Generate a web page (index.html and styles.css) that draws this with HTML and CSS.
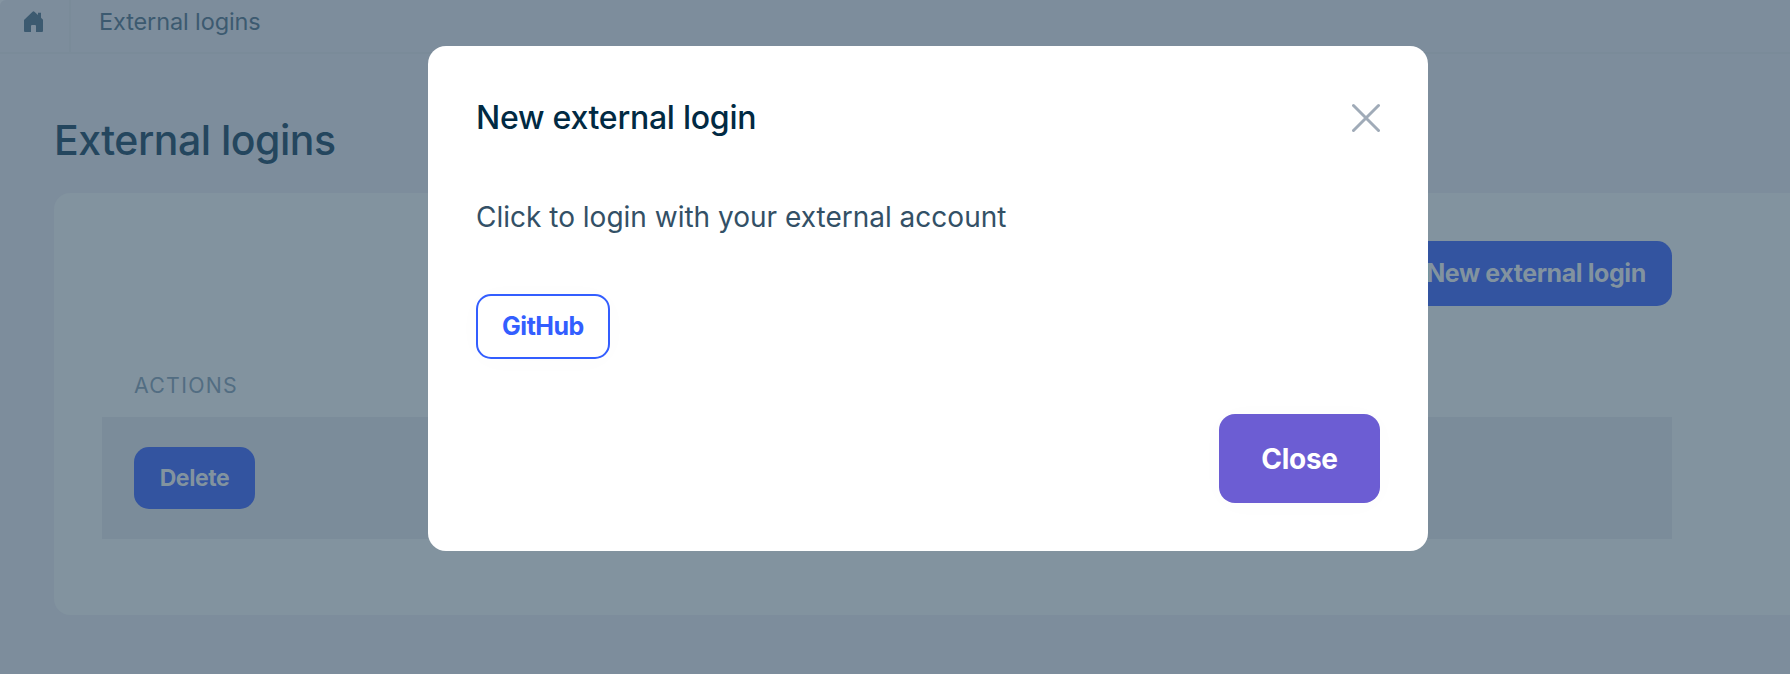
FILE: index.html
```
<!DOCTYPE html>
<html lang="en">
<head>
<meta charset="utf-8">
<title>External logins</title>
<link rel="stylesheet" href="styles.css">
</head>
<body>
<div class="page">
  <header class="topbar">
    <a class="home" aria-label="Home">
      <svg width="20" height="22" viewBox="0 0 20 22" fill="currentColor"><path d="M0 9 L8.6 .7 Q9.5 -.1 10.4 .7 L14 4 V1.8 H17 V6.8 L19 8.8 V20 Q19 21 18 21 H12 V15 Q12 14 11 14 H8 Q7 14 7 15 V21 H1 Q0 21 0 20 Z"/></svg>
    </a>
    <span class="crumb">External logins</span>
  </header>
  <main class="content">
    <h1 class="heading">External logins</h1>
    <section class="card">
      <div class="toolbar"><button class="btn btn-new">New external login</button></div>
      <div class="th">ACTIONS</div>
      <div class="row"><button class="btn btn-delete">Delete</button></div>
    </section>
  </main>
</div>
<div class="modal" role="dialog">
  <div class="modal-head">
    <h2 class="modal-title">New external login</h2>
    <svg class="close-icon" width="28" height="30" viewBox="0 0 28 30" fill="none" stroke="#a0abb8" stroke-width="3" stroke-linecap="round"><path d="M1.5 2.5 L26.5 27.5 M26.5 2.5 L1.5 27.5"/></svg>
  </div>
  <p class="modal-text">Click to login with your external account</p>
  <div class="providers"><button class="btn btn-github">GitHub</button></div>
  <div class="modal-foot"><button class="btn btn-close">Close</button></div>
</div>
</body>
</html>
```
FILE: styles.css
```
* { box-sizing: border-box; }
body {
  margin: 0;
  height: 674px;
  overflow: hidden;
  position: relative;
  font-family: Inter, "Liberation Sans", sans-serif;
  background: #8595a2;
}
h1, h2, p { margin: 0; }
.page {
  height: 674px;
  background: #7d8d9c;
  border-top-left-radius: 6px;
}
.topbar {
  display: flex;
  height: 54px;
  border-bottom: 2px solid #7a8b99;
}
.home {
  width: 71px;
  padding: 11px 0 0 24px;
  border-right: 2px solid #7a8b99;
  color: #3c5a70;
}
.home svg { display: block; }
.crumb {
  padding-left: 28px;
  font-size: 23.5px;
  line-height: 44px;
  letter-spacing: -.12px;
  color: #3c5a70;
}
.content { padding-left: 54px; }
.heading {
  height: 139px;
  padding-top: 61px;
  font-size: 41px;
  line-height: 50px;
  font-weight: 500;
  letter-spacing: -.5px;
  color: #24465e;
}
.card {
  height: 422px;
  padding: 48px 118px 0 48px;
  background: #82939f;
  border-radius: 16px 0 0 16px;
}
.toolbar { display: flex; justify-content: flex-end; height: 65px; }
.btn {
  font-family: inherit;
  font-weight: 700;
  border: 0;
  border-radius: 15px;
  padding: 0 0 1px;
  white-space: nowrap;
}
.btn-new, .btn-delete { background: #3354a0; color: #82939f; }
.btn-new { width: 272px; height: 65px; font-size: 25px; letter-spacing: -.42px; }
.th {
  height: 111px;
  padding: 63px 0 0 32px;
  font-size: 21.3px;
  line-height: 32px;
  letter-spacing: 1.3px;
  color: #526d82;
}
.row {
  display: flex;
  align-items: center;
  height: 122px;
  padding-left: 32px;
  background: #7b8c9a;
}
.btn-delete { width: 121px; height: 62px; font-size: 23px; letter-spacing: -.4px; padding: 0; }
.modal {
  position: absolute;
  left: 428px;
  top: 46px;
  width: 1000px;
  height: 505px;
  padding: 48px;
  background: #fff;
  border-radius: 18px;
}
.modal-head { display: flex; justify-content: space-between; height: 48px; align-items: center; }
.modal-title { font-size: 32px; font-weight: 500; line-height: 48px; letter-spacing: -.25px; color: #012a43; }
.modal-text { margin-top: 54px; font-size: 28px; line-height: 42px; color: #335066; }
.providers { margin-top: 56px; height: 65px; }
.btn-github {
  width: 134px;
  height: 65px;
  border: 2px solid #335eff;
  background: #fff;
  color: #335eff;
  font-size: 25px;
  letter-spacing: -.5px;
  box-shadow: 0 2px 30px rgba(0, 0, 0, .015);
}
.modal-foot { display: flex; justify-content: flex-end; margin-top: 55px; }
.btn-close {
  width: 161px;
  height: 89px;
  padding: 0;
  border-radius: 16px;
  background: #6c5dd3;
  color: #fff;
  font-size: 28px;
  letter-spacing: -.25px;
  box-shadow: 0 2px 30px rgba(0, 0, 0, .015);
}
```
